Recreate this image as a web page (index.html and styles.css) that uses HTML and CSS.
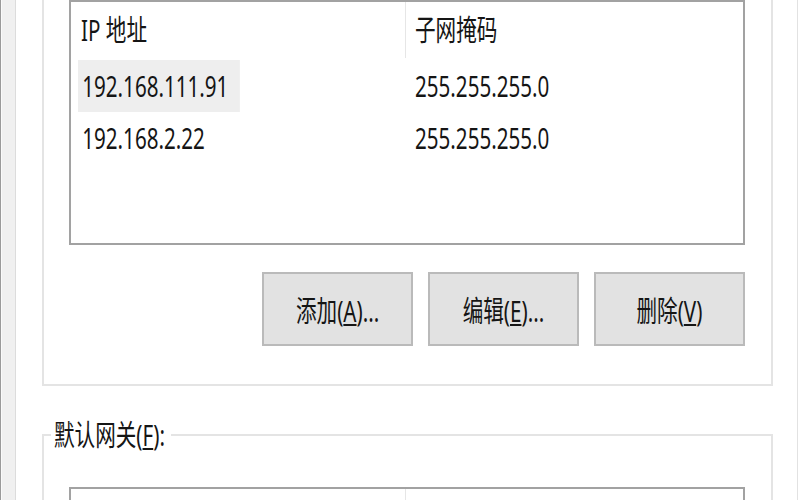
FILE: index.html
```html
<!DOCTYPE html>
<html lang="zh-CN">
<head>
  <meta charset="UTF-8">
  <meta name="viewport" content="width=device-width, initial-scale=1.0">
  <title>高级 TCP/IP 设置</title>
  <link rel="stylesheet" href="styles.css">
</head>
<body>
  <div class="window">
    <div class="frame"></div>
    <div class="page">

      <div class="group group-open">
        <div class="listview">
          <div class="lv-row lv-head">
            <div class="lv-cell col-ip"><span class="txt">IP 地址</span></div>
            <div class="lv-cell col-mask"><span class="txt">子网掩码</span></div>
          </div>
          <div class="lv-row">
            <div class="lv-cell col-ip"><span class="txt sel">192.168.111.91</span></div>
            <div class="lv-cell col-mask"><span class="txt">255.255.255.0</span></div>
          </div>
          <div class="lv-row">
            <div class="lv-cell col-ip"><span class="txt">192.168.2.22</span></div>
            <div class="lv-cell col-mask"><span class="txt">255.255.255.0</span></div>
          </div>
        </div>
        <div class="btn-row">
          <button type="button" class="btn"><span class="txt">添加(<u>A</u>)...</span></button>
          <button type="button" class="btn"><span class="txt">编辑(<u>E</u>)...</span></button>
          <button type="button" class="btn"><span class="txt">删除(<u>V</u>)</span></button>
        </div>
      </div>

      <fieldset class="group">
        <legend><span class="txt">默认网关(<u>F</u>):</span></legend>
        <div class="listview listview-gw">
          <div class="lv-row lv-head">
            <div class="lv-cell col-ip"></div>
            <div class="lv-cell col-mask"></div>
          </div>
        </div>
      </fieldset>

    </div>
  </div>
</body>
</html>
```

FILE: styles.css
```css
body {
  margin: 0;
  height: 500px;
  overflow: hidden;
  background: #fff;
  font-family: "Noto Sans", "Noto Sans CJK SC", sans-serif;
  font-size: 29px;
  color: #151515;
}
.window {
  display: flex;
  height: 500px;
  border-left: 1px solid #9a9a9a;
}
.frame {
  width: 13px;
  background: #f0f0f0;
  border-left: 1px solid #fafafa;
  border-right: 1px solid #dcdcdc;
}
.page {
  width: 781px;
  border-right: 1px solid #e2e2e2;
}

/* dialog text is drawn narrow, so squeeze each label */
.txt {
  display: inline-block;
  vertical-align: top;
  white-space: nowrap;
  transform: scaleX(.71);
  transform-origin: 0 50%;
}

.group {
  box-sizing: border-box;
  width: 731px;
  margin: 0 0 0 26px;
  border: 2px solid #e4e4e4;
}
.group-open {
  border-top: none;
  padding: 0 26px 38px 25px;
}
fieldset.group {
  margin-top: 34px;
  padding: 0 0 0 7px;
  min-width: 0;
}
fieldset.group legend {
  width: 114px;
  height: 30px;
  padding: 0 3px;
  line-height: 30px;
}

.listview {
  box-sizing: border-box;
  height: 245px;
  border: 2px solid #a2a2a2;
  background: #fff;
}
.listview-gw {
  width: 676px;
  height: 140px;
  margin: 37px 0 0 18px;
}
.lv-row {
  display: flex;
  height: 52px;
  line-height: 52px;
}
.lv-head {
  height: 56px;
  line-height: 56px;
}
.lv-head + .lv-row {
  margin-top: 2px;
}
.col-ip {
  box-sizing: border-box;
  width: 335px;
  padding-left: 7px;
}
.col-ip .txt {
  padding-left: 6px;
}
.lv-head .col-ip {
  padding-left: 10px;
  border-right: 1px solid #e6e6e6;
}
.lv-head .col-ip .txt {
  padding-left: 0;
}
.col-mask {
  padding-left: 9px;
}
.sel {
  background: #eeeeee;
  padding-right: 16px;
}

.btn-row {
  display: flex;
  justify-content: flex-end;
  gap: 15px;
  margin-top: 27px;
}
.btn {
  width: 151px;
  height: 74px;
  padding: 0;
  border: 2px solid #bababa;
  background: #e2e2e2;
  font: inherit;
  color: inherit;
}
.btn .txt {
  transform-origin: 50% 50%;
}
```
